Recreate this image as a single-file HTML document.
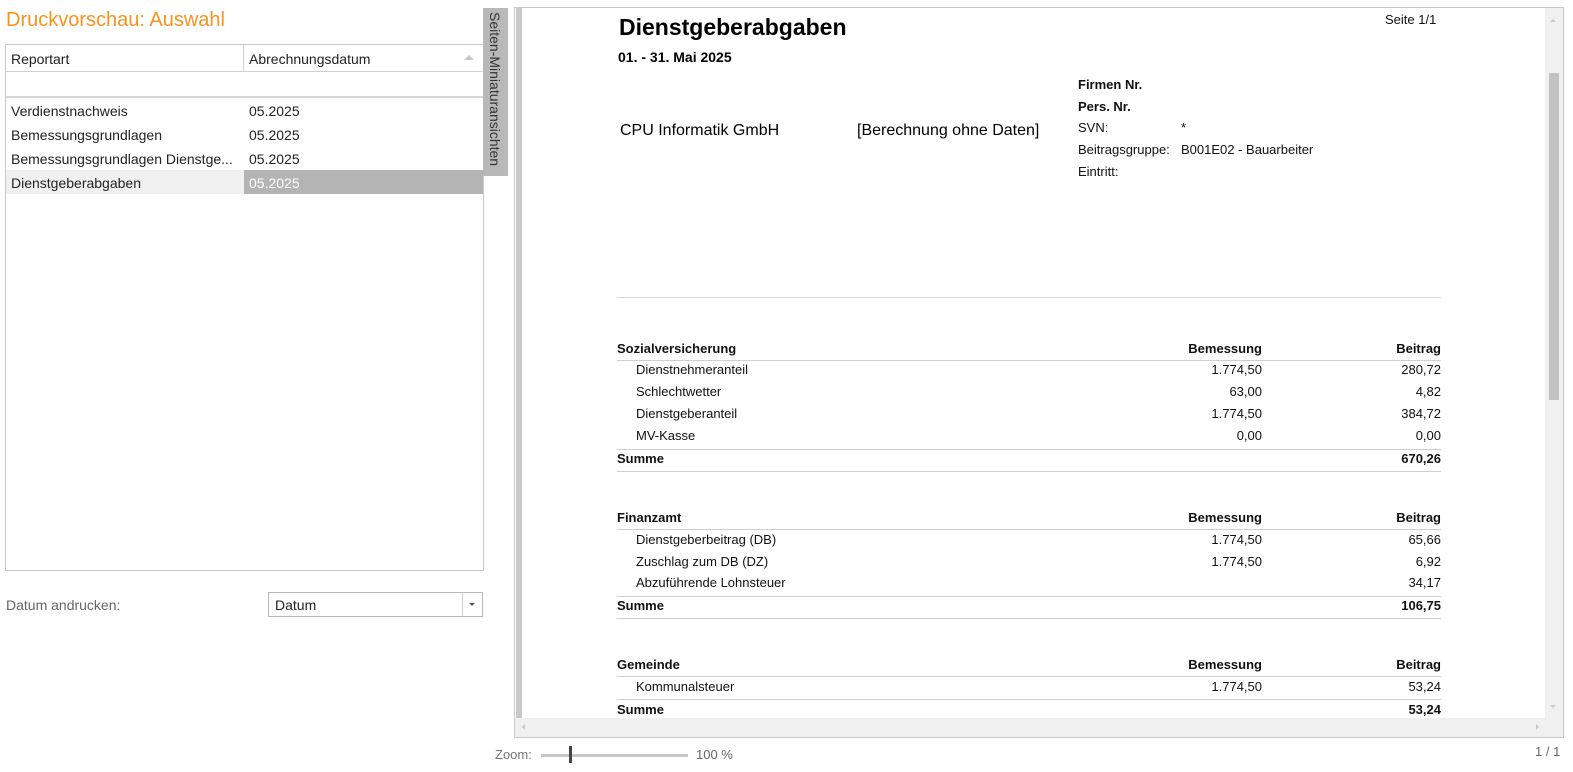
<!DOCTYPE html>
<html><head><meta charset="utf-8"><style>
*{margin:0;padding:0;box-sizing:border-box}
body{width:1573px;height:772px;background:#fff;position:relative;overflow:hidden;font-family:"Liberation Sans",sans-serif;color:#222}
.a{position:absolute;white-space:nowrap}
.t{font-size:14px;line-height:18px}
.r{font-size:13px;line-height:16px;color:#111}
.b{font-weight:bold}
.rt{text-align:right}
.hl{position:absolute;height:1px;background:#cfcfcf;left:617px;width:824px}
</style></head><body>
<div class="a" style="left:6px;top:9px;font-size:20px;color:#f7931e">Druckvorschau: Auswahl</div>
<!-- list -->
<div class="a" style="left:5px;top:44px;width:479px;height:527px;border:1px solid #c8c8c8"></div>
<div class="a" style="left:6px;top:71px;width:477px;height:1px;background:#d0d0d0"></div>
<div class="a" style="left:6px;top:96px;width:477px;height:2px;background:#d8d8d8"></div>
<div class="a" style="left:243px;top:45px;width:1px;height:26px;background:#d0d0d0"></div>
<div class="a t" style="left:11px;top:50px">Reportart</div>
<div class="a t" style="left:249px;top:50px">Abrechnungsdatum</div>
<div class="a" style="left:464px;top:55px;width:0;height:0;border-left:5px solid transparent;border-right:5px solid transparent;border-bottom:5px solid #c8c8c8"></div>
<div class="a t" style="left:11px;top:102px">Verdienstnachweis</div><div class="a t" style="left:249px;top:102px">05.2025</div>
<div class="a t" style="left:11px;top:126px">Bemessungsgrundlagen</div><div class="a t" style="left:249px;top:126px">05.2025</div>
<div class="a t" style="left:11px;top:150px">Bemessungsgrundlagen Dienstge...</div><div class="a t" style="left:249px;top:150px">05.2025</div>
<div class="a" style="left:6px;top:170px;width:238px;height:24px;background:#f0f0f0"></div>
<div class="a" style="left:244px;top:170px;width:239px;height:24px;background:#b4b4b4"></div>
<div class="a t" style="left:11px;top:174px">Dienstgeberabgaben</div><div class="a t" style="left:249px;top:174px;color:#fff">05.2025</div>
<!-- vertical tab -->
<div class="a" style="left:483px;top:8px;width:25px;height:168px;background:#b8b8b8"></div>
<div class="a t" style="left:486px;top:12px;writing-mode:vertical-rl;color:#333">Seiten-Miniaturansichten</div>
<!-- datum -->
<div class="a t" style="left:6px;top:596px;color:#666">Datum andrucken:</div>
<div class="a" style="left:268px;top:592px;width:215px;height:25px;border:1px solid #b8b8b8"></div>
<div class="a" style="left:462px;top:593px;width:1px;height:23px;background:#ccc"></div>
<div class="a t" style="left:275px;top:596px">Datum</div>
<div class="a" style="left:469px;top:603px;border-left:3px solid transparent;border-right:3px solid transparent;border-top:3px solid #555"></div>
<!-- preview frame -->
<div class="a" style="left:514px;top:7px;width:1050px;height:731px;border:1px solid #c8c8c8"></div>
<div class="a" style="left:516px;top:8px;width:6px;height:710px;background:#c8c8c8"></div>
<div class="a" style="left:515px;top:718px;width:1048px;height:19px;background:#f0f0f0"></div>
<div class="a" style="left:1545px;top:8px;width:18px;height:710px;background:#f0f0f0"></div>
<div class="a" style="left:1549px;top:73px;width:10px;height:327px;background:#c2c2c2"></div>
<div class="a" style="left:1550px;top:19px;border-left:3px solid transparent;border-right:3px solid transparent;border-bottom:3px solid #c8c8c8"></div>
<div class="a" style="left:1550px;top:705px;border-left:3px solid transparent;border-right:3px solid transparent;border-top:3px solid #c8c8c8"></div>
<div class="a" style="left:522px;top:724px;border-top:3px solid transparent;border-bottom:3px solid transparent;border-right:3px solid #c8c8c8"></div>
<div class="a" style="left:1536px;top:724px;border-top:3px solid transparent;border-bottom:3px solid transparent;border-left:3px solid #c8c8c8"></div>
<!-- report -->
<div style="position:absolute;left:522px;top:8px;width:1023px;height:710px;overflow:hidden">
<div style="position:absolute;left:-522px;top:-8px;width:1573px;height:772px">
<div class="a b" style="left:619px;top:14px;font-size:23px;color:#000">Dienstgeberabgaben</div>
<div class="a r" style="left:1385px;top:12px">Seite 1/1</div>
<div class="a b" style="left:618px;top:49px;font-size:14px;color:#000">01. - 31. Mai 2025</div>
<div class="a" style="left:620px;top:122px;font-size:16px;color:#000">CPU Informatik GmbH</div>
<div class="a" style="left:857px;top:122px;font-size:16px;color:#000">[Berechnung ohne Daten]</div>
<div class="a r b" style="left:1078px;top:77px">Firmen Nr.</div>
<div class="a r b" style="left:1078px;top:99px">Pers. Nr.</div>
<div class="a r" style="left:1078px;top:120px">SVN:</div><div class="a r" style="left:1181px;top:120px">*</div>
<div class="a r" style="left:1078px;top:142px">Beitragsgruppe:</div><div class="a r" style="left:1181px;top:142px">B001E02 - Bauarbeiter</div>
<div class="a r" style="left:1078px;top:164px">Eintritt:</div>
<div class="hl" style="top:297px;background:#d8d8d8"></div>
<!-- sec1 -->
<div class="a r b" style="left:617px;top:341px">Sozialversicherung</div>
<div class="a r b rt" style="left:1100px;width:162px;top:341px">Bemessung</div>
<div class="a r b rt" style="left:1300px;width:141px;top:341px">Beitrag</div>
<div class="hl" style="top:360px"></div>
<div class="a r" style="left:636px;top:362px">Dienstnehmeranteil</div><div class="a r rt" style="left:1100px;width:162px;top:362px">1.774,50</div><div class="a r rt" style="left:1300px;width:141px;top:362px">280,72</div>
<div class="a r" style="left:636px;top:384px">Schlechtwetter</div><div class="a r rt" style="left:1100px;width:162px;top:384px">63,00</div><div class="a r rt" style="left:1300px;width:141px;top:384px">4,82</div>
<div class="a r" style="left:636px;top:406px">Dienstgeberanteil</div><div class="a r rt" style="left:1100px;width:162px;top:406px">1.774,50</div><div class="a r rt" style="left:1300px;width:141px;top:406px">384,72</div>
<div class="a r" style="left:636px;top:428px">MV-Kasse</div><div class="a r rt" style="left:1100px;width:162px;top:428px">0,00</div><div class="a r rt" style="left:1300px;width:141px;top:428px">0,00</div>
<div class="hl" style="top:449px"></div>
<div class="a r b" style="left:617px;top:451px">Summe</div><div class="a r b rt" style="left:1300px;width:141px;top:451px">670,26</div>
<div class="hl" style="top:471px"></div>
<!-- sec2 -->
<div class="a r b" style="left:617px;top:510px">Finanzamt</div>
<div class="a r b rt" style="left:1100px;width:162px;top:510px">Bemessung</div>
<div class="a r b rt" style="left:1300px;width:141px;top:510px">Beitrag</div>
<div class="hl" style="top:529px"></div>
<div class="a r" style="left:636px;top:532px">Dienstgeberbeitrag (DB)</div><div class="a r rt" style="left:1100px;width:162px;top:532px">1.774,50</div><div class="a r rt" style="left:1300px;width:141px;top:532px">65,66</div>
<div class="a r" style="left:636px;top:554px">Zuschlag zum DB (DZ)</div><div class="a r rt" style="left:1100px;width:162px;top:554px">1.774,50</div><div class="a r rt" style="left:1300px;width:141px;top:554px">6,92</div>
<div class="a r" style="left:636px;top:575px">Abzuführende Lohnsteuer</div><div class="a r rt" style="left:1300px;width:141px;top:575px">34,17</div>
<div class="hl" style="top:596px"></div>
<div class="a r b" style="left:617px;top:598px">Summe</div><div class="a r b rt" style="left:1300px;width:141px;top:598px">106,75</div>
<div class="hl" style="top:618px"></div>
<!-- sec3 -->
<div class="a r b" style="left:617px;top:657px">Gemeinde</div>
<div class="a r b rt" style="left:1100px;width:162px;top:657px">Bemessung</div>
<div class="a r b rt" style="left:1300px;width:141px;top:657px">Beitrag</div>
<div class="hl" style="top:676px"></div>
<div class="a r" style="left:636px;top:679px">Kommunalsteuer</div><div class="a r rt" style="left:1100px;width:162px;top:679px">1.774,50</div><div class="a r rt" style="left:1300px;width:141px;top:679px">53,24</div>
<div class="hl" style="top:699px"></div>
<div class="a r b" style="left:617px;top:702px">Summe</div><div class="a r b rt" style="left:1300px;width:141px;top:702px">53,24</div>
</div></div>
<!-- zoom -->
<div class="a" style="left:495px;top:747px;font-size:13px;color:#777">Zoom:</div>
<div class="a" style="left:541px;top:754px;width:147px;height:3px;background:#c8c8c8"></div>
<div class="a" style="left:569px;top:746px;width:3px;height:17px;background:#444"></div>
<div class="a" style="left:696px;top:747px;font-size:13px;color:#666">100 %</div>
<div class="a" style="left:1535px;top:744px;font-size:13px;color:#666">1 / 1</div>
</body></html>
